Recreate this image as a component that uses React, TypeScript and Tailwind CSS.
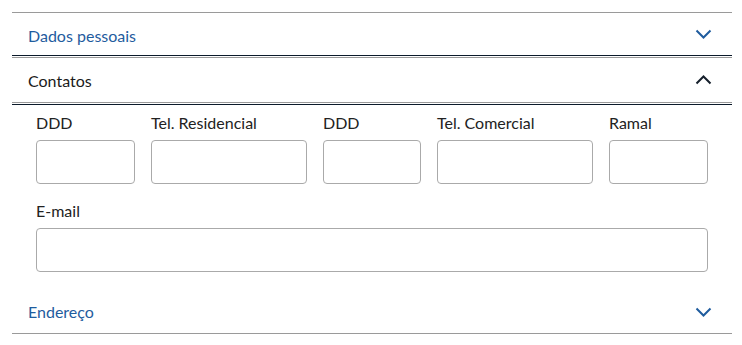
import React from "react";

const Chevron = ({ up, color }: { up?: boolean; color: string }) => (
  <svg width="17" height="10" viewBox="0 0 17 10" className="block">
    <polyline
      points={up ? "1.5,8.5 8.5,1.5 15.5,8.5" : "1.5,1.5 8.5,8.5 15.5,1.5"}
      fill="none"
      stroke={color}
      strokeWidth="2"
    />
  </svg>
);

const Field = ({ label }: { label: string }) => (
  <div className="flex flex-col">
    <label className="text-[16px] leading-5 text-[#222] mb-[7px] whitespace-nowrap">{label}</label>
    <div className="h-[44px] rounded-[4px] border border-[#aaaaaa] bg-white" />
  </div>
);

export default function App() {
  return (
    <div
      className="w-[742px] h-[345px] bg-white pt-3 px-3 overflow-hidden"
      style={{ fontFamily: "Lato, 'Open Sans', sans-serif" }}
    >
      <div className="w-[720px]">
        {/* Dados pessoais */}
        <div className="border-t border-[#9a9a9a]">
          <div className="h-[43px] flex items-center justify-between pl-4 pr-[20px] border-b border-[#0b1a2a]">
            <span className="text-[16px] leading-6 text-[#1f5c9e] pt-[3px]">Dados pessoais</span>
            <Chevron color="#1f5c9e" />
          </div>
        </div>
        <div className="h-px" />
        {/* Contatos */}
        <div className="border-t border-[#9a9a9a]">
          <div className="h-[45px] flex items-center justify-between pl-4 pr-[20px] border-b border-[#9a9a9a]">
            <span className="text-[16px] leading-6 text-[#1a1a1a] pt-[2px]">Contatos</span>
            <Chevron up color="#16202c" />
          </div>
          <div className="h-px" />
          <div className="border-t border-[#0b1a2a] px-6 pt-2 pb-[19px]">
            <div className="grid grid-cols-[99px_156px_98px_156px_99px] gap-x-4">
              <Field label="DDD" />
              <Field label="Tel. Residencial" />
              <Field label="DDD" />
              <Field label="Tel. Comercial" />
              <Field label="Ramal" />
            </div>
            <div className="mt-[17px]">
              <Field label="E-mail" />
            </div>
          </div>
        </div>
        {/* Endereço */}
        <div className="border-b border-[#9a9a9a]">
          <div className="h-[42px] flex items-center justify-between pl-4 pr-[20px]">
            <span className="text-[16px] leading-6 text-[#1f5c9e]">Endereço</span>
            <Chevron color="#1f5c9e" />
          </div>
        </div>
      </div>
    </div>
  );
}
